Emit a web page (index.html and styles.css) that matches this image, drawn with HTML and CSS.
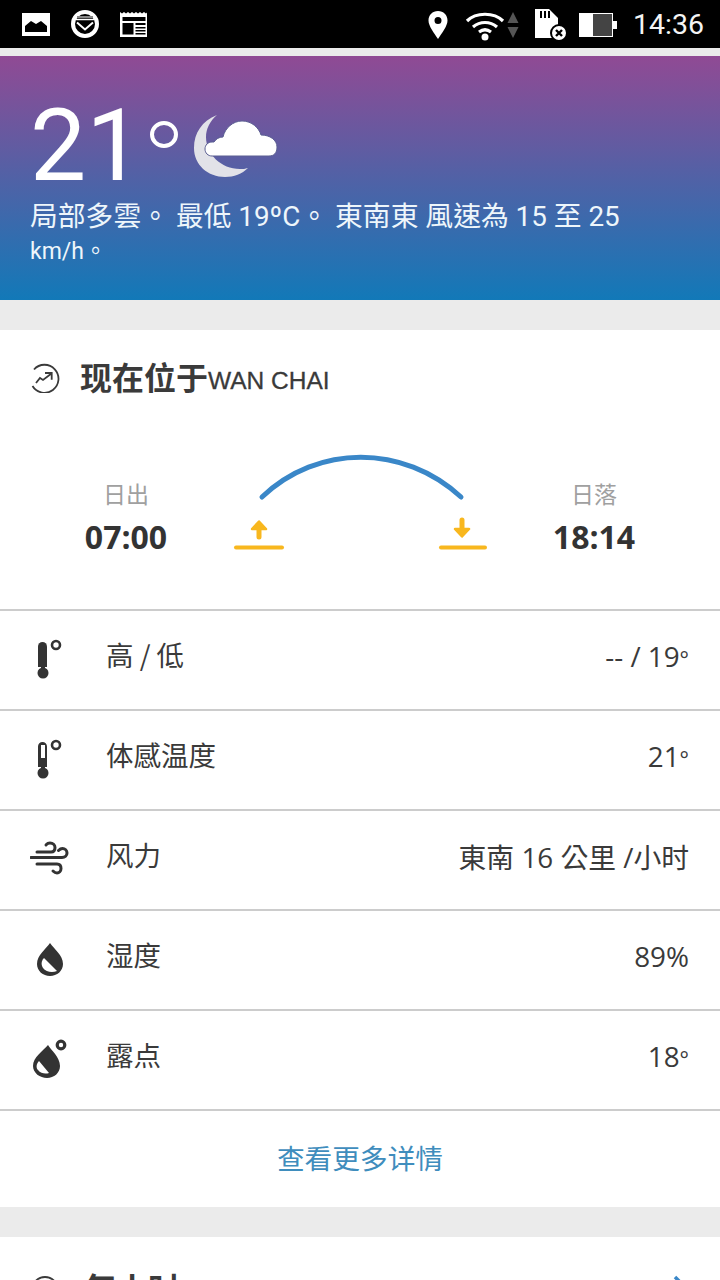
FILE: index.html
```html
<!DOCTYPE html>
<html lang="zh-TW">
<head>
<meta charset="utf-8">
<title>天气</title>
<link rel="stylesheet" href="styles.css">
</head>
<body>
<div class="page">
  <div class="status">
    <div class="status-group">
      <svg class="si" width="30" height="26" viewBox="0 0 30 26"><path fill="#fff" d="M1 2h28v23H1z"/><path d="M4 21v-6l6-5 5 3 5-3 6 5v6z" fill="#000"/></svg>
      <svg class="si" width="30" height="30" viewBox="0 0 30 30"><circle cx="15" cy="15" r="12" fill="#000" stroke="#fff" stroke-width="4"/><path d="M7 7h16v2H7z" fill="#888"/><path d="M7 13.500l8 7 8-7" fill="none" stroke="#fff" stroke-width="2"/><path d="M6 10.500h18" stroke="#fff" stroke-width="1.500"/></svg>
      <svg class="si" width="30" height="30" viewBox="0 0 30 30"><path fill="#fff" d="M1 3l2 1.500 2-1.500 2 1.500 2-1.500 2 1.500 2-1.500 2 1.500 2-1.500 2 1.500 2-1.500 2 1.500 2-1.500 2 1.500 1-1V28H1z"/><path fill="#000" d="M3.500 8h23v4h-23zM3.500 14h11v11.500h-11zM16.500 14h10v2h-10zM16.500 18h10v1.500h-10zM16.500 21h10v1.500h-10zM16.500 24h10v1.500h-10z"/></svg>
    </div>
    <div class="status-group status-right">
      <svg class="pin" width="22" height="30" viewBox="0 0 22 30"><path fill-rule="evenodd" fill="#fff" d="M11 1c5.500 0 9.500 4 9.500 9.500C20.500 16 15 23 11 29 7 23 1.500 16 1.500 10.500 1.500 5 5.500 1 11 1zm0 6a3.500 3.500 0 100 7 3.500 3.500 0 000-7z"/></svg>
      <svg class="wifi" width="40" height="32" viewBox="0 0 40 32"><g fill="none" stroke="#fff" stroke-width="3.200"><path d="M2 12C11 3 29 3 38 12"/><path d="M8 18c7-6 17-6 24 0"/><path d="M14 23c4-3 8-3 12 0"/></g><circle cx="20" cy="28" r="3.500" fill="#fff"/></svg>
      <svg class="arrows" width="14" height="28" viewBox="0 0 14 28"><path fill="#555" d="M7 1l5.500 11h-11zM7 27L1.500 16h11z"/></svg>
      <svg class="sd" width="34" height="34" viewBox="0 0 34 34"><path fill="#fff" d="M1 1h14l9 9v20H1z"/><path fill="#000" d="M6 3h2v7H6zM10 3h2v7h-2zM14 3h2v7h-2z"/><circle cx="25" cy="25" r="8" fill="#fff" stroke="#000" stroke-width="2"/><path d="M22 22l6 6m0-6l-6 6" stroke="#000" stroke-width="2.400"/></svg>
      <svg class="battery" width="40" height="28" viewBox="0 0 40 28"><path fill="#fff" d="M1 2h14v24H1z"/><path fill="#444" d="M15 2h20v24H15z"/><path fill="#fff" d="M15 2h20v1H15zM15 25h20v1H15zM34 2h1v24h-1z"/><path fill="#fff" d="M35 10h4v8h-4z"/></svg>
      <span class="clock">14:36</span>
    </div>
  </div>
  <div class="gap-thin"></div>

  <section class="hero">
    <div class="hero-top">
      <span class="temp">21</span><span class="temp-deg"></span>
      <svg class="weather-icon" width="84" height="63" viewBox="0 0 84 63"><path fill="#e2e2e8" d="M23 0C8 6 0 18 0 33c0 17 14 29 31 29 9 0 17-3 23-9-3 1-5 1-8 1-19 0-34-15-34-32 0-8 4-16 11-22z"/><path fill="#fff" stroke="#5b5f92" stroke-width="1" d="M18 41c-4 0-7-3-7-7s3-7 7-7h2c2-3 5-5 9-5 2-9 10-16 19-16 10 0 17 7 19 14 9 0 16 5 16 12 0 6-3 9-8 9z"/></svg>
    </div>
    <p class="hero-text">局部多雲。 最低 19ºC。 東南東 風速為 15 至 25</p>
    <p class="hero-text hero-small">km/h。</p>
  </section>
  <div class="gap"></div>

  <section class="card">
    <header class="card-head">
      <svg class="head-icon" width="30" height="30" viewBox="0 0 30 30" fill="none" stroke="#3a3a3a" stroke-width="1.800"><path d="M4 6.500A14 14 0 1 1 2.500 23"/><path d="M6 20l4-5 3 2 8.500-6.500"/><path d="M15 10h6.700v6.700"/></svg>
      <h2 class="card-title">现在位于<span class="place">WAN CHAI</span></h2>
    </header>

    <div class="sun">
      <div class="sun-time">
        <div class="sun-label">日出</div>
        <div class="sun-value">07:00</div>
      </div>
      <svg class="sun-arc" width="254" height="100" viewBox="0 0 254 100">
        <path d="M29 43C85-10 170-10 228 43" fill="none" stroke="#3a87c8" stroke-width="5" stroke-linecap="round"/>
        <g fill="none" stroke="#f8b71e" stroke-linecap="round" stroke-linejoin="round">
          <path d="M3 93.500h46" stroke-width="4"/>
          <path d="M208 93.500h44" stroke-width="4"/>
          <path d="M26 75v8M229 66v8" stroke-width="5"/>
          <path d="M26 67.500l7 7.500H19zM229 82.500l7-7.500h-14z" fill="#f8b71e" stroke-width="2.500"/>
        </g>
      </svg>
      <div class="sun-time">
        <div class="sun-label">日落</div>
        <div class="sun-value">18:14</div>
      </div>
    </div>

    <ul class="rows">
      <li class="row">
        <svg class="row-icon" width="40" height="44" viewBox="0 0 40 44"><path fill="#333" d="M8 7.500a4.500 4.500 0 019 0V28h-9z"/><circle cx="13" cy="34" r="5.500" fill="#333"/><path fill="#333" d="M11 27h4v4h-4z"/><circle cx="26" cy="6" r="4" fill="none" stroke="#333" stroke-width="2.600"/></svg>
        <span class="row-label">高 / 低</span><span class="row-value">-- / 19<span class="deg">°</span></span>
      </li>
      <li class="row">
        <svg class="row-icon" width="40" height="44" viewBox="0 0 40 44"><path fill="#333" fill-rule="evenodd" d="M8 7.500a4.500 4.500 0 019 0V28h-9zM11 6v13h4V6z"/><circle cx="13" cy="34" r="5.500" fill="#333"/><path fill="#333" d="M11 27h4v4h-4z"/><circle cx="26" cy="6" r="4" fill="none" stroke="#333" stroke-width="2.600"/></svg>
        <span class="row-label">体感温度</span><span class="row-value">21<span class="deg">°</span></span>
      </li>
      <li class="row">
        <svg class="row-icon" width="40" height="44" viewBox="0 0 40 44" fill="none" stroke="#333" stroke-width="3" stroke-linecap="round"><path d="M7 13H21c3 0 4-2 4-4.500S23 4 20 4s-3 1-4 2"/><path d="M1 18.500H32c3 0 5-2 5-4.500s-2-4.500-4.500-4.500c-2 0-3 1-4 2"/><path d="M7 25H27c3 0 4 2 4 4.500S29 34 27 34s-3-1-4-2"/></svg>
        <span class="row-label">风力</span><span class="row-value">東南 16 公里 /小时</span>
      </li>
      <li class="row">
        <svg class="row-icon" width="40" height="44" viewBox="0 0 40 44"><path fill="#333" d="M20 4c4 6 13 12 13 21 0 7-6 12-13 12S7 32 7 25C7 16 16 10 20 4z"/><path fill="#fff" d="M14 19c-3 3-3 7-1 10 3 4 9 5 14 3z"/></svg>
        <span class="row-label">湿度</span><span class="row-value">89%</span>
      </li>
      <li class="row">
        <svg class="row-icon" width="40" height="44" viewBox="0 0 40 44"><path fill="#333" d="M18 6c3 5 12 12 12 21 0 7-6 12-13 12S3 34 3 27C3 18 13 12 18 6z"/><path fill="#fff" d="M9 22c-3 3-3 7-1 9 3 4 8 4 11 3z"/><circle cx="31" cy="6" r="3.800" fill="none" stroke="#333" stroke-width="3.200"/></svg>
        <span class="row-label">露点</span><span class="row-value">18<span class="deg">°</span></span>
      </li>
    </ul>
    <div class="more">查看更多详情</div>
  </section>
  <div class="gap"></div>

  <section class="card card-next">
    <svg class="head-icon next-icon" width="30" height="30" viewBox="0 0 30 30" fill="none" stroke="#3a3a3a" stroke-width="1.800"><circle cx="15" cy="15" r="13"/><path d="M15 8v8l5 3"/></svg>
    <h2 class="card-title next-title">每小时</h2>
    <svg class="chevron" width="16" height="26" viewBox="0 0 16 26"><path d="M2 2l11 11L2 24" fill="none" stroke="#3a87c8" stroke-width="3.500"/></svg>
  </section>
</div>
</body>
</html>
```

FILE: styles.css
```css
* { box-sizing: border-box; }
html, body { margin: 0; padding: 0; }
body { background: #ebebeb; font-family: "Noto Sans CJK TC", "Noto Sans", sans-serif; color: #333; }
.page { width: 720px; height: 1280px; overflow: hidden; }

.status { height: 48px; background: #000; display: flex; justify-content: space-between; align-items: center; padding: 0 18px 0 21px; }
.status-group { display: flex; align-items: center; gap: 19px; }
.status-right { gap: 0; }
.si { display: block; }
.pin { margin: 2px 16px 0 0; }
.wifi { margin: 1px 1px 0 0; }
.arrows { margin: 2px 14px 0 0; }
.sd { margin: 2px 10px 0 0; }
.battery { margin: 2px 15px 0 0; }
.clock { font-family: Roboto, sans-serif; font-size: 28.500px; color: #f4f4f4; line-height: 48px; padding-top: 2px; width: 69px; white-space: nowrap; }

.gap-thin { height: 8px; background: #ebebeb; }
.gap { height: 30px; background: #ebebeb; }

.hero { height: 244px; padding: 32px 30px 0; background: linear-gradient(180deg, #904a94 0%, #1279b8 100%); color: #fff; }
.hero-top { display: flex; height: 110px; align-items: flex-start; }
.temp { font-family: Roboto, sans-serif; font-weight: 400; font-size: 100px; line-height: 106px; margin: 5px 0 0 0; }
.temp-deg { width: 28px; height: 27px; border: 4.500px solid #fff; border-radius: 50%; margin: 33px 0 0 8px; }
.weather-icon { margin: 27px 0 0 16px; }
.hero-text { margin: 0; font-size: 27.800px; line-height: 38px; white-space: nowrap; color: #eef6fb; font-family: Roboto, "Noto Sans CJK TC", sans-serif; }
.hero-small { font-size: 23px; line-height: 30px; margin-top: 1px; }

.card { background: #fff; }
.card-head { height: 99px; display: flex; align-items: center; padding: 0 0 3px 30px; }
.head-icon { flex: none; }
.card-title { margin: 0 0 0 20px; font-size: 32px; font-weight: 700; color: #3a3a3a; font-family: "Noto Sans CJK SC", sans-serif; line-height: 40px; white-space: nowrap; }
.place { font-family: "Liberation Sans", sans-serif; font-size: 24.500px; font-weight: 400; vertical-align: 1px; -webkit-text-stroke: 0.3px #3a3a3a; }

.sun { height: 180px; display: flex; align-items: flex-start; padding-left: 83px; }
.sun-time { width: 86px; text-align: center; padding-top: 48px; }
.sun-label { font-size: 23px; line-height: 32px; color: #a0a0a0; font-family: "Noto Sans CJK SC", sans-serif; }
.sun-value { font-family: "Open Sans", sans-serif; font-weight: 700; font-size: 32px; line-height: 46px; color: #333; margin-top: 5px; }
.sun-arc { flex: none; margin: 25px 64px 0 64px; }

.rows { list-style: none; margin: 0; padding: 0; }
.row { height: 100px; border-top: 2px solid #cccccc; display: flex; align-items: center; padding: 0 31px 0 30px; }
.row-icon { flex: none; margin: 2px 36px 0 0; }
.row-label { font-size: 27.500px; font-family: "Noto Sans CJK SC", sans-serif; color: #3a3a3a; margin-bottom: 12px; }
.row-value { margin: 0 0 8px auto; font-family: "Open Sans", "Noto Sans CJK TC", sans-serif; font-size: 27.800px; color: #3a3a3a; }
.deg { font-size: 22px; }
.more { height: 98px; border-top: 2px solid #cccccc; text-align: center; line-height: 92px; font-size: 27.700px; color: #3f8dbd; font-family: "Noto Sans CJK SC", sans-serif; }

.card-next { display: flex; align-items: flex-start; height: 100px; padding: 30px 31px 0 30px; }
.next-icon { margin-top: 8px; }
.next-title { margin-left: 24px; }
.chevron { margin: 8px 0 0 auto; }
```
